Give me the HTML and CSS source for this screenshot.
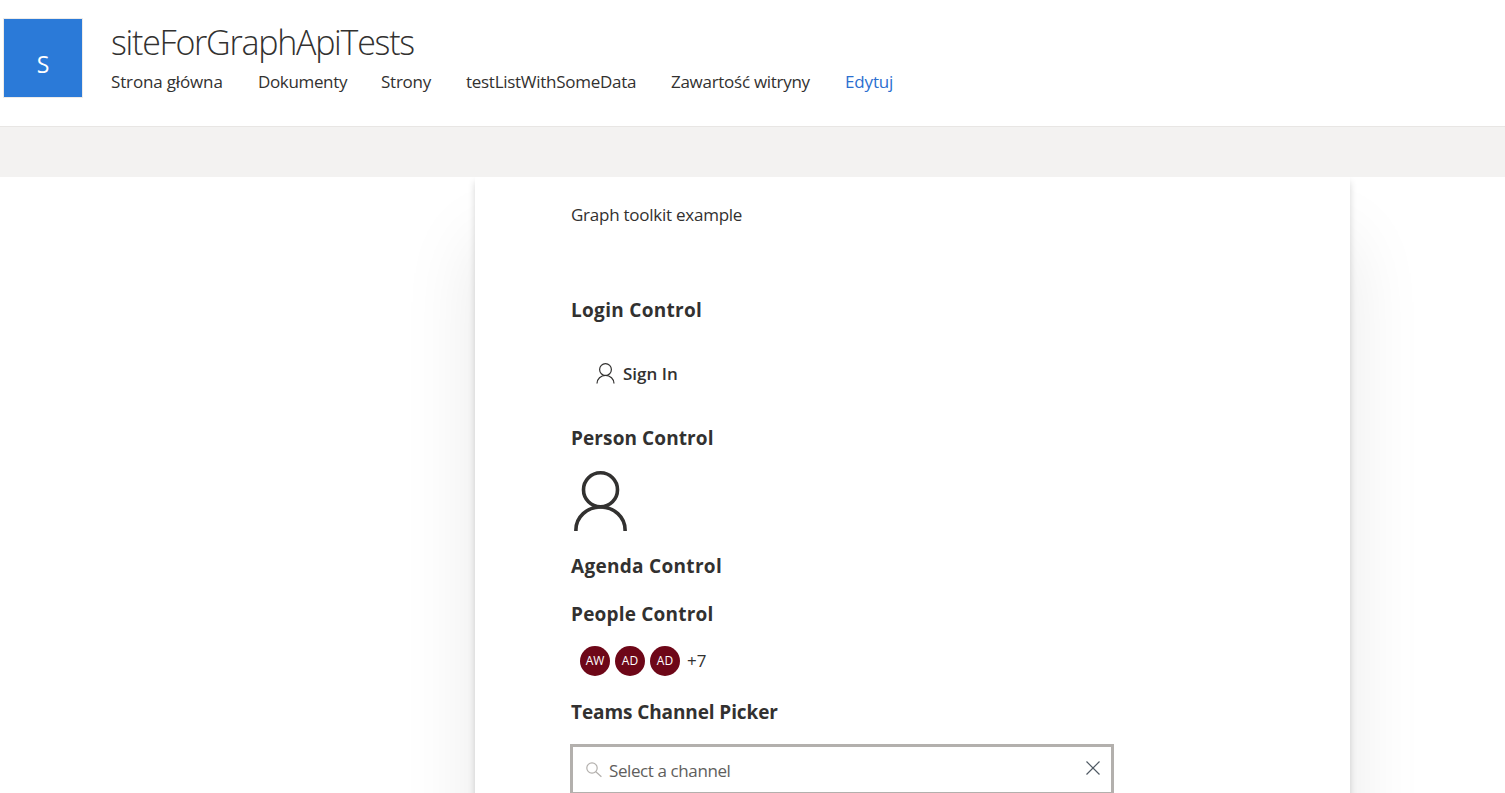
FILE: index.html
```html
<!DOCTYPE html>
<html lang="pl">
<head>
<meta charset="utf-8">
<title>siteForGraphApiTests</title>
<link rel="stylesheet" href="styles.css">
</head>
<body>
<header class="site-header">
  <div class="site-logo">S</div>
  <div class="site-info">
    <div class="site-title">siteForGraphApiTests</div>
    <nav class="site-nav">
      <a class="nav-home">Strona główna</a>
      <a class="nav-docs">Dokumenty</a>
      <a class="nav-pages">Strony</a>
      <a class="nav-list">testListWithSomeData</a>
      <a class="nav-contents">Zawartość witryny</a>
      <a class="nav-edit">Edytuj</a>
    </nav>
  </div>
</header>
<div class="command-bar"></div>
<main class="workspace">
  <section class="canvas">
    <p class="intro"><span>Graph toolkit example</span></p>
    <h3 class="h-login"><span>Login Control</span></h3>
    <button class="login">
      <svg width="19" height="21" viewBox="0 0 19 21" fill="none" stroke="#323130" stroke-width="1.2"><circle cx="9.5" cy="6.6" r="5.9"/><path d="M1 20.5a8.5 8.1 0 0 1 17 0"/></svg>
      <span>Sign In</span>
    </button>
    <h3 class="h-person"><span>Person Control</span></h3>
    <svg class="person" width="53" height="60" viewBox="0 0 53 60" fill="none" stroke="#323130" stroke-width="3.6"><circle cx="26.5" cy="18.8" r="17"/><path d="M1.9 60v-1C1.9 46 13 36 26.5 36S51.1 46 51.1 59v1"/></svg>
    <h3 class="h-agenda"><span>Agenda Control</span></h3>
    <h3 class="h-people"><span>People Control</span></h3>
    <div class="people">
      <div class="avatar">AW</div>
      <div class="avatar">AD</div>
      <div class="avatar">AD</div>
      <span class="more">+7</span>
    </div>
    <h3 class="h-teams"><span>Teams Channel Picker</span></h3>
    <div class="picker">
      <svg class="search" width="16" height="16" viewBox="0 0 16 16" fill="none" stroke="#b3b0ad" stroke-width="1.2"><circle cx="6" cy="6" r="5.2"/><path d="M9.8 9.8l5.6 5"/></svg>
      <span class="placeholder">Select a channel</span>
      <svg class="close" width="14" height="14" viewBox="0 0 14 14" fill="none" stroke="#505a64" stroke-width="1.2"><path d="M.5.5l13 13M13.5.5l-13 13"/></svg>
    </div>
  </section>
</main>
</body>
</html>
```
FILE: styles.css
```css
* { box-sizing: border-box; }
body {
  margin: 0;
  height: 793px;
  overflow: hidden;
  background: #fff;
  color: #323130;
  font-family: "Segoe UI", "Open Sans", "Noto Sans", sans-serif;
  font-size: 17px;
  font-weight: 400;
}
.site-header {
  display: flex;
  height: 126px;
  padding: 18px 0 0 3px;
}
.site-logo {
  width: 80px;
  height: 80px;
  padding-top: 11px;
  border: 1px solid #edebe9;
  background: #2b7ad8;
  background-clip: padding-box;
  color: #fff;
  font-size: 23px;
  line-height: 68px;
  text-align: center;
}
.site-info { padding-left: 28px; white-space: nowrap; }
.site-title {
  height: 48px;
  font-size: 34px;
  font-weight: 300;
  letter-spacing: -1.25px;
  line-height: 48px;
}
.site-nav { display: flex; gap: 35px; line-height: 32px; }
.nav-home { width: 112px; letter-spacing: -.15px; }
.nav-docs { width: 88px; letter-spacing: -.35px; }
.nav-pages { width: 50px; letter-spacing: -.25px; }
.nav-list { width: 170px; letter-spacing: -.28px; }
.nav-contents { width: 139px; letter-spacing: -.28px; }
.nav-edit { color: #2b6fd0; letter-spacing: -.15px; }
.command-bar {
  height: 51px;
  background: #f3f2f1;
  border-top: 1px solid #e8e6e4;
}
.workspace { height: 616px; overflow: hidden; }
.canvas {
  width: 875px;
  height: 800px;
  margin-left: 475px;
  padding: 22px 96px 0;
  background: #fff;
  box-shadow: 0 5px 7px rgba(0, 0, 0, .16), 0 64px 72px rgba(0, 0, 0, .09);
}
.intro { margin: 0; height: 95px; line-height: 32px; letter-spacing: -.25px; }
h3 { margin: 0; font-size: 19px; line-height: 32px; font-weight: 700; height: 48px; white-space: nowrap; }
h3.h-login { height: 64px; letter-spacing: .3px; }
.h-person { letter-spacing: .1px; }
.h-agenda { letter-spacing: .3px; }
.h-people { letter-spacing: .2px; }
.h-teams { letter-spacing: -.1px; }
.login {
  display: flex;
  align-items: center;
  gap: 8px;
  height: 32px;
  margin: -1px 0 33px;
  padding: 0 0 0 25px;
  border: 0;
  background: none;
  color: #323130;
  font: 600 17px/32px "Segoe UI", "Open Sans", sans-serif;
}
.login span { padding-top: 1px; }
.person { display: block; margin: 1px 0 19px 3px; }
.people {
  display: flex;
  align-items: center;
  gap: 5px;
  height: 30px;
  margin: 0 0 20px 9px;
}
.avatar {
  width: 30px;
  height: 30px;
  border-radius: 50%;
  background: #6e0718;
  color: #fff;
  font-size: 12px;
  line-height: 30px;
  text-align: center;
}
.more { margin-left: 2px; line-height: 30px; }
.picker {
  display: flex;
  align-items: center;
  width: 544px;
  height: 51px;
  margin-left: -1px;
  padding: 0 11px 0 13px;
  border: 3px solid #b3b0ad;
}
.placeholder { flex: 1; margin-left: 7px; padding-top: 1px; color: #605e5c; letter-spacing: -.4px; }
.close { margin-top: -3px; }
```
